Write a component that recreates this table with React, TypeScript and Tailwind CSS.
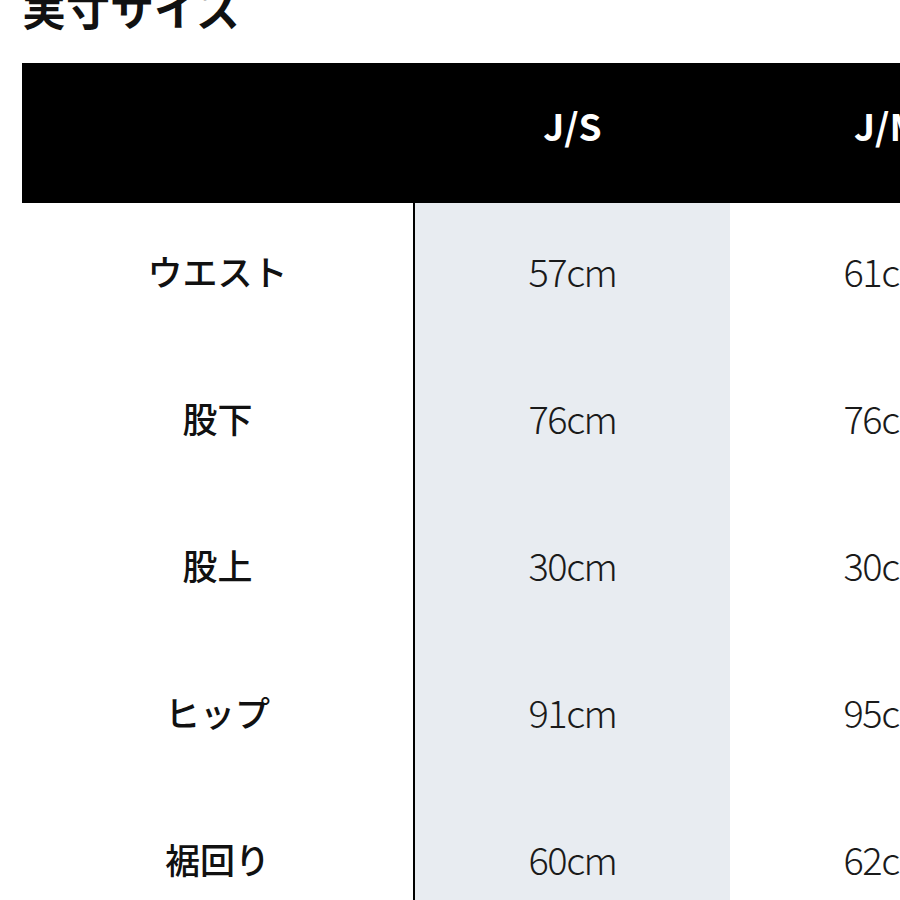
import * as React from 'react'

const sizes = ['J/S', 'J/M', 'J/L']

const rows: { label: string; values: string[] }[] = [
  { label: 'ウエスト', values: ['57cm', '61cm', '65cm'] },
  { label: '股下', values: ['76cm', '76cm', '76cm'] },
  { label: '股上', values: ['30cm', '30cm', '31cm'] },
  { label: 'ヒップ', values: ['91cm', '95cm', '99cm'] },
  { label: '裾回り', values: ['60cm', '62cm', '64cm'] },
]

const font = 'font-["Noto_Sans_CJK_JP","Noto_Sans",sans-serif]'

export default function App() {
  return (
    <div className={`h-[900px] w-[900px] overflow-hidden bg-white ${font}`}>
      <h2 className="ml-[22px] mt-[-15px] text-[44px] font-bold leading-[44px] text-[#111]">実寸サイズ</h2>

      <div className="ml-[22px] mt-[34px] w-[1340px]">
        {/* 見出し行 */}
        <div className="flex h-[140px] bg-black pb-[14px] text-white">
          <div className="w-[393px] shrink-0" />
          {sizes.map((s) => (
            <div key={s} className="flex w-[315px] shrink-0 items-center justify-center text-[37px] font-bold">
              {s}
            </div>
          ))}
        </div>

        {rows.map((r) => (
          <div key={r.label} className="flex h-[147px]">
            <div className="flex w-[393px] shrink-0 items-center justify-center border-r-2 border-black pb-[10px] text-[35px] font-medium text-[#111]">
              {r.label}
            </div>
            {r.values.map((v, i) => (
              <div
                key={i}
                className={`flex w-[315px] shrink-0 items-center justify-center pb-[12px] text-[38px] font-light tracking-[-1.5px] text-[#1a1a1a] ${
                  i === 0 ? 'bg-[#e8ecf1]' : ''
                }`}
              >
                {v}
              </div>
            ))}
          </div>
        ))}
      </div>
    </div>
  )
}
